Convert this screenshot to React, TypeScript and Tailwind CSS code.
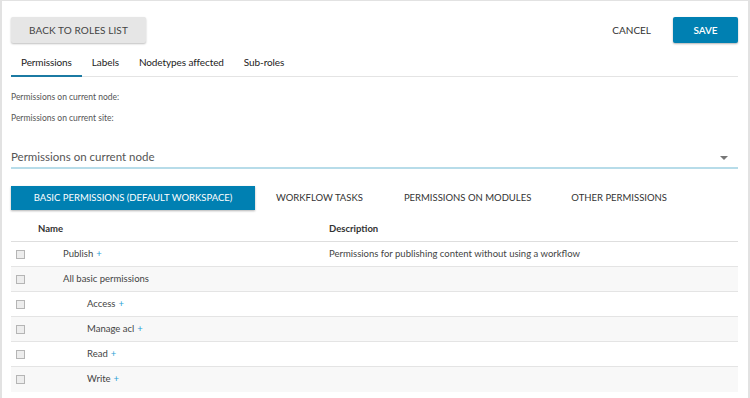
import React from 'react';

const rows = [
  { name: 'Publish', plus: true, level: 1, description: 'Permissions for publishing content without using a workflow' },
  { name: 'All basic permissions', plus: false, level: 1, description: '' },
  { name: 'Access', plus: true, level: 2, description: '' },
  { name: 'Manage acl', plus: true, level: 2, description: '' },
  { name: 'Read', plus: true, level: 2, description: '' },
  { name: 'Write', plus: true, level: 2, description: '' },
];

const tabs = ['Permissions', 'Labels', 'Nodetypes affected', 'Sub-roles'];
const groups = ['WORKFLOW TASKS', 'PERMISSIONS ON MODULES', 'OTHER PERMISSIONS'];

export default function App() {
  return (
    <div className="w-[750px] h-[398px] overflow-hidden bg-white font-['Lato',sans-serif] text-[#333]">
      <div className="h-full border-t border-l-2 border-r-2 border-[#e2e2e2] pl-[9px] pr-[10px] pt-[16px]">
        {/* Header actions */}
        <div className="flex items-center justify-between h-[26px]">
          <button className="h-[26px] w-[135px] bg-[#e6e6e6] rounded-[2px] shadow-[0_1px_2px_rgba(0,0,0,0.25)] text-[10px] tracking-[0.1px] text-[#444]">
            BACK TO ROLES LIST
          </button>
          <div className="flex items-center">
            <button className="text-[10px] text-[#333] mr-[22px]">CANCEL</button>
            <button className="h-[26px] w-[65px] bg-[#0080b2] rounded-[2px] shadow-[0_1px_2px_rgba(0,0,0,0.3)] text-[10px] font-semibold text-white">
              SAVE
            </button>
          </div>
        </div>

        {/* Tabs */}
        <div className="mt-[6px] flex border-b border-[#e4e4e4] h-[28px]">
          {tabs.map((t, i) => (
            <div
              key={t}
              className={`flex items-center px-[10px] text-[10px] text-[#222] tracking-[-0.1px] ${
                i === 0 ? 'border-b-2 border-[#1b7aa3] -mb-px' : ''
              }`}
            >
              {t}
            </div>
          ))}
        </div>

        {/* Info */}
        <div className="mt-[14px] text-[8.5px] text-[#555] leading-[12px]">Permissions on current node:</div>
        <div className="mt-[9px] text-[8.5px] text-[#555] leading-[12px]">Permissions on current site:</div>

        {/* Select */}
        <div className="mt-[23px] flex items-center justify-between h-[22px] border-b-2 border-[#b7dce9]">
          <span className="text-[11.5px] text-[#555]">Permissions on current node</span>
          <svg width="8" height="5" viewBox="0 0 8 5" className="mr-[10px] mt-[2px]">
            <path d="M0 0 L8 0 L4 4 Z" fill="#777" />
          </svg>
        </div>

        {/* Permission groups */}
        <div className="mt-[17px] flex items-center h-[24px]">
          <button className="h-[24px] w-[244px] bg-[#0080b2] shadow-[0_1px_2px_rgba(0,0,0,0.3)] text-[9.5px] text-white">
            BASIC PERMISSIONS (DEFAULT WORKSPACE)
          </button>
          <div className="flex text-[9.5px] text-[#333]">
            <span className="ml-[21px]">{groups[0]}</span>
            <span className="ml-[41px]">{groups[1]}</span>
            <span className="ml-[40px]">{groups[2]}</span>
          </div>
        </div>

        {/* Table */}
        <div className="mt-[7px]">
          <div className="flex items-center h-[25px] border-b border-[#dedede] text-[9.5px] font-bold text-[#333]">
            <div className="w-[318px] pl-[27px]">Name</div>
            <div>Description</div>
          </div>
          {rows.map((r, i) => (
            <div
              key={r.name}
              className={`flex items-center h-[25px] text-[9.5px] text-[#444] border-b border-[#e4e4e4] last:border-b-0 ${
                i % 2 === 1 ? 'bg-[#f8f8f8]' : 'bg-white'
              }`}
            >
              <div className="w-[318px] flex items-center">
                <span className="ml-[5px] w-[9px] h-[9px] border border-[#b5b5b5] bg-[#ededed]" />
                <span className={r.level === 1 ? 'ml-[38px]' : 'ml-[62px]'}>
                  {r.name}
                  {r.plus && <span className="ml-[3px] text-[#2a9fd6]">+</span>}
                </span>
              </div>
              <div>{r.description}</div>
            </div>
          ))}
        </div>
      </div>
    </div>
  );
}
